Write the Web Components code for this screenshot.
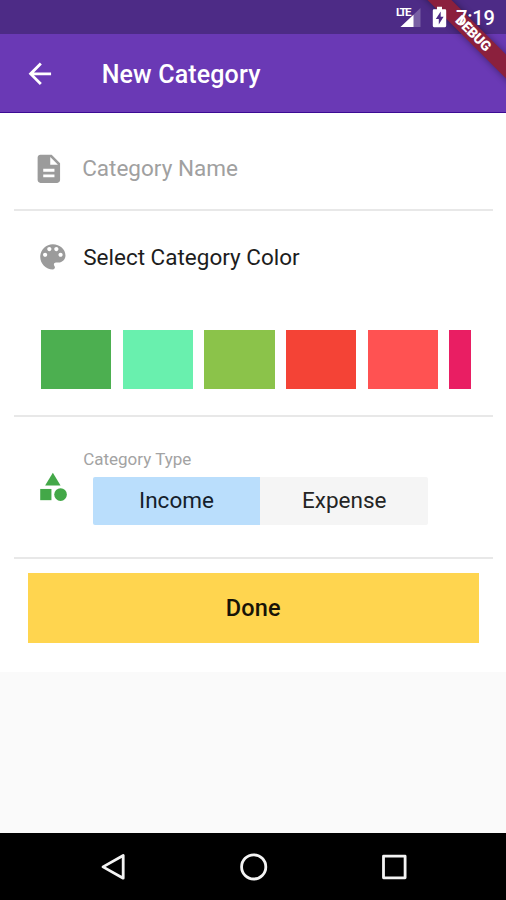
<!DOCTYPE html>
<html lang="en">
<head>
<meta charset="utf-8">
<title>New Category</title>
<style>
html,body{margin:0;height:100%}
body{background:#fafafa;font-family:Roboto,"Liberation Sans",sans-serif;overflow:hidden}
</style>
</head>
<body>
<category-screen></category-screen>
<script>
const define = (name, css, html) => customElements.define(name, class extends HTMLElement {
  constructor() {
    super();
    this.attachShadow({mode: 'open'}).innerHTML = `<style>*{box-sizing:border-box}svg{display:block}${css}</style>${html}`;
  }
});

define('status-bar', `
:host{display:flex;height:34px;background:#4d2b86;color:#fff;align-items:center;justify-content:flex-end;padding-right:10px;box-sizing:border-box}
svg{flex:none;position:relative;z-index:3}
.clock{position:relative;z-index:3;font-size:20px;font-weight:500;line-height:34px;width:40px;margin:2px 0 0 9px;white-space:nowrap;letter-spacing:-.2px}
.lte{font-size:11.500px;font-weight:700;letter-spacing:-1.500px;line-height:12px;align-self:flex-start;margin:6px -12px 0 0;width:16px}
`, `
<span class="lte">LTE</span>
<svg width="22" height="34" viewBox="0 0 22 34"><path d="M20.500 8v19H.5z" fill="#fff" opacity=".25"/><path d="M13.500 14.700V27H.5z" fill="#fff"/></svg>
<svg width="15" height="34" viewBox="0 0 15 34" style="margin-left:10px"><path fill="#fff" d="M5 6.800h5v2.400h3q1.200 0 1.200 1.200v15.400q0 1.400-1.200 1.400H2q-1.200 0-1.200-1.400V10.400Q.8 9.200 2 9.200h3z"/><path fill="#4d2b86" d="M8.700 11.500 3.800 19h3v5.400l4.800-7.600H8.700z"/></svg>
<span class="clock">7:19</span>`);

define('debug-ribbon', `
:host{position:absolute;top:0;right:0;width:90px;height:90px;overflow:hidden;z-index:2;pointer-events:none}
div{position:absolute;left:-13px;top:25px;width:140px;height:17px;background:#8b203d;box-shadow:0 0 7px rgba(0,0,0,.42);transform:rotate(45deg);color:#fff;font-size:14px;font-weight:900;line-height:17px;text-align:center;letter-spacing:-.25px}
`, `<div>DEBUG</div>`);

define('app-header', `
:host{display:flex;align-items:center;height:79px;background:#6a39b5;color:#fff;padding-left:23px;border-bottom:1px solid #3c0b94;box-sizing:border-box}
svg{margin-top:2px}
h1{font-size:25px;font-weight:500;margin:4px 0 0 45px;line-height:30px;letter-spacing:.15px;white-space:nowrap}
`, `<svg width="33.700" height="33.700" viewBox="0 0 24 24" fill="#fff"><path d="M20 11H7.830l5.590-5.590L12 4l-8 8 8 8 1.410-1.410L7.830 13H20z"/></svg>
<h1><slot></slot></h1>`);

define('form-row', `
:host{display:block;margin:0 13.500px 0 14px;border-bottom:2px solid #e8e8e8;box-sizing:border-box}
`, `<slot></slot>`);

define('name-field', `
:host{display:flex;align-items:center;height:96px;padding:15px 0 0 17.500px;box-sizing:border-box;color:#a0a0a0}
span{font-size:22.500px;margin:-2px 0 0 17px;white-space:nowrap}
`, `<svg width="33.700" height="33.700" viewBox="0 0 24 24" fill="#9b9b9b"><path d="M14 2H6c-1.100 0-1.990.9-1.990 2L4 20c0 1.100.89 2 1.990 2H18c1.100 0 2-.9 2-2V8l-6-6zm2 16H8v-2h8v2zm0-4H8v-2h8v2zm-3-5V3.500L18.500 9H13z"/></svg><span><slot></slot></span>`);

define('color-swatch', `
:host{display:block;flex:none;width:70.300px;height:59px;background:var(--swatch)}
`, ``);

define('color-picker', `
:host{display:block;height:204px;padding-top:29px;box-sizing:border-box}
.head{display:flex;align-items:center;height:34px;padding-left:21.500px}
.head span{font-size:22.500px;color:#1d1d1d;margin:0 0 0 14px;white-space:nowrap}
.list{display:flex;gap:11.350px;overflow:hidden;width:430px;margin:55.500px 0 0 27px}
`, `<div class="head"><svg width="33.700" height="33.700" viewBox="0 0 24 24" fill="#9b9b9b"><path d="M12 3c-4.970 0-9 4.030-9 9s4.030 9 9 9c.83 0 1.500-.67 1.500-1.500 0-.39-.15-.74-.39-1.010-.23-.26-.38-.61-.38-.99 0-.83.67-1.500 1.500-1.500H16c2.760 0 5-2.240 5-5 0-4.420-4.030-8-9-8zm-5.500 9c-.83 0-1.500-.67-1.500-1.500S5.670 9 6.500 9 8 9.670 8 10.500 7.330 12 6.500 12zm3-4C8.670 8 8 7.330 8 6.500S8.670 5 9.500 5s1.500.67 1.500 1.500S10.330 8 9.500 8zm5 0c-.83 0-1.500-.67-1.500-1.500S13.670 5 14.500 5s1.500.67 1.500 1.500S15.330 8 14.500 8zm3 4c-.83 0-1.500-.67-1.500-1.500S16.670 9 17.500 9s1.500.67 1.500 1.500-.67 1.500-1.500 1.500z"/></svg><span>Select Category Color</span></div>
<div class="list"><slot></slot></div>`);

define('type-option', `
:host{display:flex;align-items:center;justify-content:center;flex:1;height:48px;padding-bottom:2px;box-sizing:border-box;background:#f5f5f5;color:#242424;font-size:22.500px;border-radius:0 2px 2px 0}
:host([selected]){flex:none;width:167px;background:#badefc;color:#14202b;border-radius:2px 0 0 2px}
`, `<slot></slot>`);

define('type-picker', `
:host{display:flex;height:140px;padding-left:21.500px;box-sizing:border-box}
svg{margin-top:53px;flex:none}
.body{margin:31px 0 0 14px}
.label{font-size:17px;line-height:22px;color:#a3a3a3;white-space:nowrap}
.toggle{display:flex;width:335.500px;margin:6.500px 0 0 9.800px}
`, `<svg width="33.700" height="33.700" viewBox="0 0 24 24" fill="#43a848"><path d="M12 2 6.500 11h11z"/><circle cx="17.500" cy="17.500" r="4.500"/><path d="M3 13.500h8v8H3z"/></svg>
<div class="body"><div class="label">Category Type</div><div class="toggle"><slot></slot></div></div>`);

define('done-button', `
:host{display:flex;align-items:center;justify-content:center;height:69.500px;margin:14px 27.500px 0 28px;background:#ffd54f;color:#171307;font-size:23.500px;font-weight:500;letter-spacing:.2px}
`, `<slot></slot>`);

define('nav-bar', `
:host{display:flex;height:67px;background:#000;padding:0 97px 0 98px;align-items:center;justify-content:space-between;box-sizing:border-box}
`, `<svg width="30" height="30" viewBox="0 0 30 30" fill="none" stroke="#f4f4f4" stroke-width="2.800" stroke-linejoin="round"><path d="M25.200 3.500v22.700L5 14.850z"/></svg>
<svg width="30" height="30" viewBox="0 0 30 30" fill="none" stroke="#f4f4f4" stroke-width="2.800"><circle cx="14.700" cy="14.900" r="12.100"/></svg>
<svg width="30" height="30" viewBox="0 0 30 30" fill="none" stroke="#f4f4f4" stroke-width="2.800" stroke-linejoin="round"><path d="M4.500 4.200h21.600v21.600H4.500z"/></svg>`);

define('category-screen', `
:host{display:flex;flex-direction:column;width:506px;height:900px;position:relative;overflow:hidden;background:#fafafa}
main{flex:1}
.card{background:#fff;height:559px}
`, `
<status-bar></status-bar>
<app-header>New Category</app-header>
<debug-ribbon></debug-ribbon>
<main><div class="card">
<form-row><name-field>Category Name</name-field></form-row>
<form-row><color-picker>
<color-swatch style="--swatch:#4caf50"></color-swatch><color-swatch style="--swatch:#69f0ae"></color-swatch><color-swatch style="--swatch:#8bc34a"></color-swatch><color-swatch style="--swatch:#f44336"></color-swatch><color-swatch style="--swatch:#ff5252"></color-swatch><color-swatch style="--swatch:#e91e63"></color-swatch>
</color-picker></form-row>
<form-row><type-picker><type-option selected>Income</type-option><type-option>Expense</type-option></type-picker></form-row>
<done-button>Done</done-button>
</div></main>
<nav-bar></nav-bar>`);
</script>
</body>
</html>
